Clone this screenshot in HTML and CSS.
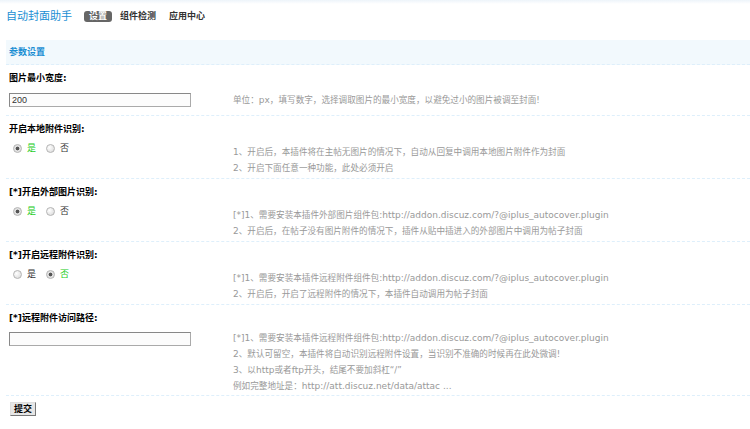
FILE: index.html
```html
<!DOCTYPE html>
<html lang="zh-CN">
<head>
    <meta charset="UTF-8">
    <title>自动封面助手 - 设置</title>
    <link rel="stylesheet" href="styles.css">
</head>
<body>
    <div class="topbar">
        <h3 class="app-title">自动封面助手</h3>
        <ul class="tabs">
            <li class="current">设置</li>
            <li>组件检测</li>
            <li>应用中心</li>
        </ul>
    </div>

    <form class="settings">
        <div class="band">参数设置</div>

        <!-- 图片最小宽度 -->
        <div class="label-row">图片最小宽度:</div>
        <div class="value-row single">
            <div class="field input-field"><input class="txt" type="text" value="200"></div>
            <div class="tips">单位：<span class="en">px</span>，填写数字，选择调取图片的最小宽度，以避免过小的图片被调至封面!</div>
        </div>

        <!-- 本地附件 -->
        <div class="label-row">开启本地附件识别:</div>
        <div class="value-row">
            <div class="field">
                <div class="choices">
                    <label class="on"><input type="radio" name="local" checked>是</label>
                    <label><input type="radio" name="local">否</label>
                </div>
            </div>
            <div class="tips">
                <span class="en">1</span>、开启后，本插件将在主帖无图片的情况下，自动从回复中调用本地图片附件作为封面<br>
                <span class="en">2</span>、开启下面任意一种功能，此处必须开启
            </div>
        </div>

        <!-- 外部图片 -->
        <div class="label-row">[*]开启外部图片识别:</div>
        <div class="value-row">
            <div class="field">
                <div class="choices">
                    <label class="on"><input type="radio" name="outer" checked>是</label>
                    <label><input type="radio" name="outer">否</label>
                </div>
            </div>
            <div class="tips">
                <span class="en">[*]1</span>、需要安装本插件外部图片组件包<span class="en">:http://addon.discuz.com/?@iplus_autocover.plugin</span><br>
                <span class="en">2</span>、开启后，在帖子没有图片附件的情况下，插件从贴中插进入的外部图片中调用为帖子封面
            </div>
        </div>

        <!-- 远程附件 -->
        <div class="label-row">[*]开启远程附件识别:</div>
        <div class="value-row">
            <div class="field">
                <div class="choices">
                    <label><input type="radio" name="remote">是</label>
                    <label class="on"><input type="radio" name="remote" checked>否</label>
                </div>
            </div>
            <div class="tips">
                <span class="en">[*]1</span>、需要安装本插件远程附件组件包<span class="en">:http://addon.discuz.com/?@iplus_autocover.plugin</span><br>
                <span class="en">2</span>、开启后，开启了远程附件的情况下，本插件自动调用为帖子封面
            </div>
        </div>

        <!-- 远程附件路径 -->
        <div class="label-row">[*]远程附件访问路径:</div>
        <div class="value-row tall">
            <div class="field input-field"><input class="txt" type="text" value=""></div>
            <div class="tips">
                <span class="en">[*]1</span>、需要安装本插件远程附件组件包<span class="en">:http://addon.discuz.com/?@iplus_autocover.plugin</span><br>
                <span class="en">2</span>、默认可留空，本插件将自动识别远程附件设置，当识别不准确的时候再在此处微调!<br>
                <span class="en">3</span>、以<span class="en">http</span>或者<span class="en">ftp</span>开头，结尾不要加斜杠“/”<br>
                例如完整地址是：<span class="en">http://att.discuz.net/data/attac ...</span>
            </div>
        </div>

        <div class="actions">
            <button type="button">提交</button>
        </div>
    </form>
</body>
</html>
```

FILE: styles.css
```css
body {
    margin: 0;
    font-family: "DejaVu Sans", "Noto Sans CJK SC", sans-serif;
    font-size: 9px;
    line-height: 14px;
    color: #333;
    background: linear-gradient(#edf4fa, #fff 4px) no-repeat;
}

.topbar {
    display: flex;
    align-items: flex-start;
    height: 40px;
    padding-left: 6px;
}

.app-title {
    margin: 10px 12px 0 0;
    font-size: 11px;
    line-height: 13px;
    font-weight: normal;
    color: #1a8ed3;
}

.tabs {
    list-style: none;
    margin: 11px 0 0;
    padding: 0;
    display: flex;
    gap: 3px;
}

.tabs li {
    padding: 0 5px;
    line-height: 11px;
    font-weight: bold;
    color: #333;
    border-radius: 3px;
}

.tabs .current {
    background-color: #666;
    color: #fff;
}

.settings {
    margin: 0 0 0 6px;
}

.band {
    height: 24px;
    line-height: 24px;
    padding-left: 3px;
    background-color: #f2f9fd;
    border-bottom: 1px dashed #deeffb;
    color: #1a8ed3;
    font-weight: bold;
}

.label-row {
    height: 14px;
    padding: 6px 3px 0;
    font-weight: bold;
    color: #000;
}

.value-row {
    display: grid;
    grid-template-columns: 227px 1fr;
    border-bottom: 1px dashed #deeffb;
}

.field {
    align-self: start;
    padding: 5px 0 0 3px;
}

.input-field {
    padding: 8px 0 8px 3px;
}

.tips {
    align-self: end;
    padding: 8px 0 2px;
    font-size: 8.6px;
    line-height: 16px;
    color: #999;
}

.tips .en {
    font-size: 9px;
}

.single .tips {
    align-self: center;
    padding: 0;
}

.tall .input-field {
    padding-top: 7px;
}

.tall .tips {
    padding-top: 5px;
    padding-bottom: 1px;
}

.txt {
    display: block;
    box-sizing: border-box;
    width: 182px;
    height: 14px;
    margin: 0;
    padding: 0 2px;
    border: 1px solid #aaa;
    border-top-color: #888;
    border-left-color: #888;
    background-color: #fcfcfc;
    font-family: "Liberation Sans", sans-serif;
    font-size: 9px;
    color: #333;
}

.choices {
    display: flex;
    align-items: center;
    height: 14px;
    padding-left: 4px;
}

.choices label {
    display: flex;
    align-items: center;
    margin-right: 10px;
    color: #333;
}

.choices label.on {
    color: #22cc22;
}

.choices input {
    appearance: none;
    -webkit-appearance: none;
    box-sizing: border-box;
    width: 9px;
    height: 9px;
    margin: 0 5px 0 0;
    border: 1px solid #b4b4b4;
    border-radius: 50%;
    background: radial-gradient(circle at 35% 35%, #fff, #d6d6d6);
}

.choices input:checked {
    background: radial-gradient(circle, #555 0 1.6px, #e2e2e2 2.2px);
}

.actions {
    padding: 6px 0 0 4px;
}

button {
    height: 14px;
    padding: 0 3px;
    border: 1px solid;
    border-color: #ddd #777 #777 #ddd;
    background-color: #e6e6e6;
    font-family: "Noto Sans CJK SC", sans-serif;
    font-size: 9px;
    line-height: 12px;
    font-weight: bold;
    color: #000;
}
```
